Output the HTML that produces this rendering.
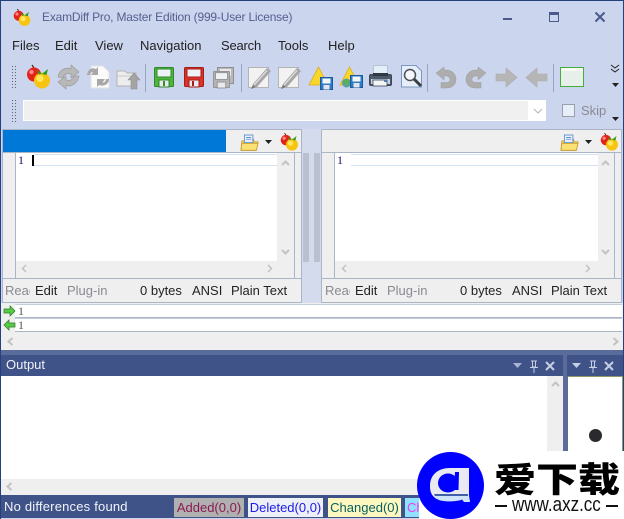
<!DOCTYPE html>
<html><head><meta charset="utf-8"><style>
html,body{margin:0;padding:0}
body{width:624px;height:519px;position:relative;overflow:hidden;background:#cbd5ee;font-family:"Liberation Sans","Noto Sans CJK SC",sans-serif;font-size:13px;color:#222}
.a{position:absolute}
.t{position:absolute;white-space:nowrap;line-height:16px;height:16px}
svg{position:absolute;overflow:visible}
</style></head><body>
<svg width="0" height="0" style="position:absolute">
<defs>
<g id="ap"><path d="M6 0l2 3" stroke="#521" stroke-width="1.2" fill="none"/><circle cx="8" cy="9.500" r="7" fill="#e2231a"/><circle cx="5.500" cy="7" r="2.200" fill="#f88"/><circle cx="16" cy="15.500" r="8" fill="#f7c412"/><circle cx="14" cy="13.500" r="3.500" fill="#fde95e"/><path d="M16 8.500L10.500 5 13 9.500zM16 9L22 4 20.500 10z" fill="#2f9a22"/></g>
<g id="fl"><rect x=".5" y=".5" width="19" height="19" rx="1"/><rect x="3" y="2" width="14" height="8" fill="#eef2f6"/><rect x="5" y="13" width="10" height="7" fill="#e8eaee"/></g>
<g id="pen"><rect x=".5" y="3.500" width="20" height="20" fill="#f2f2f2" stroke="#b4b4b4"/><path d="M3 25L5 20 19 4 23 7 9 23z" fill="#a6a6a6"/><path d="M6 21L19 6.500" stroke="#e2e2e2" stroke-width="1.300"/><path d="M3 25L5 21 7.500 23z" fill="#777"/></g>
<g id="wf"><path d="M9.500 0L19 18H0z" fill="#f8d62e" stroke="#dcae18" stroke-width=".8"/></g>
<g id="bf"><rect x=".5" y=".5" width="12" height="12" fill="#2f7cc6" stroke="#1a5a9c"/><rect x="2.500" y="1.500" width="8" height="5" fill="#f2f6fa"/><rect x="3.500" y="8" width="6" height="4.500" fill="#e2e6ec"/></g>
<g id="fo"><path d="M1 7h6l1-2h7v3H20l-2 10H0z" fill="#f5d35a" stroke="#c59b33"/><rect x="4" y="0" width="10" height="9" fill="#e6effa" stroke="#5d8cc6"/><path d="M6 3h6M6 5h6" stroke="#5d8cc6"/><path d="M1 10H20L18 18H0z" fill="#fbe272" stroke="#c59b33"/></g>
</defs></svg>

<!-- frame -->
<div class="a" style="left:0;top:0;width:624px;height:1px;background:#24407f"></div>
<div class="a" style="left:0;top:0;width:1px;height:519px;background:#24407f"></div>
<div class="a" style="left:623px;top:0;width:1px;height:519px;background:#24407f"></div>

<!-- title -->
<svg style="left:13px;top:9px" width="17" height="17"><use href="#ap" transform="scale(.72)"/></svg>
<div class="t" style="left:42px;top:9px;font-size:12px;color:#55608f;letter-spacing:-.19px">ExamDiff Pro, Master Edition (999-User License)</div>
<div class="a" style="left:503px;top:18px;width:9px;height:2px;background:#4a5a8c"></div>
<div class="a" style="left:549px;top:12px;width:8px;height:6px;border:1px solid #4a5a8c;border-top:3px solid #4a5a8c"></div>
<svg style="left:594px;top:11px" width="12" height="12"><path d="M1.500 1.500L10.500 10.500M10.500 1.500L1.500 10.500" stroke="#4a5a8c" stroke-width="2"/></svg>

<!-- menu -->
<div class="t" style="left:12px;top:38px">Files</div>
<div class="t" style="left:55px;top:38px">Edit</div>
<div class="t" style="left:95px;top:38px">View</div>
<div class="t" style="left:140px;top:38px">Navigation</div>
<div class="t" style="left:221px;top:38px;letter-spacing:-.2px">Search</div>
<div class="t" style="left:278px;top:38px">Tools</div>
<div class="t" style="left:328px;top:38px">Help</div>

<!-- grips -->
<div class="a" style="left:11px;top:65px;width:6px;height:25px;background-image:radial-gradient(#667 .6px,transparent .8px);background-size:3px 3px"></div>
<div class="a" style="left:11px;top:99px;width:6px;height:25px;background-image:radial-gradient(#667 .6px,transparent .8px);background-size:3px 3px"></div>

<!-- toolbar separators -->
<div class="a" style="left:145px;top:64px;width:1px;height:28px;background:#9aa6c0"></div>
<div class="a" style="left:241px;top:64px;width:1px;height:28px;background:#9aa6c0"></div>
<div class="a" style="left:427px;top:64px;width:1px;height:28px;background:#9aa6c0"></div>
<div class="a" style="left:553px;top:64px;width:1px;height:28px;background:#9aa6c0"></div>

<!-- toolbar icons -->
<svg style="left:26px;top:65px" width="24" height="24"><use href="#ap"/></svg>
<svg style="left:57px;top:65px" width="23" height="24"><path d="M1 12C2 5 8 2 14 3.500V0l8 7-8 6V9C10 8 7 9 6 13z" fill="#b8b8b8" stroke="#9c9c9c" stroke-width=".7"/><path d="M22 11C21 18 15 22 9 20.500V24l-8-7 8-6v4c4 1 7 0 8-4z" fill="#b8b8b8" stroke="#9c9c9c" stroke-width=".7"/></svg>
<svg style="left:87px;top:65px" width="23" height="24"><path d="M4 1H16L22 7V23H4z" fill="#fbfbfb" stroke="#e2e2e2"/><path d="M0 10C1 4 5 2 9 4L11 2V10H4L6 7.500C4 7 3 8 3 10z" fill="#a8a8a8"/><path d="M22 14C22 19 17 22 12 20L10 22V14H18L15.500 17.500C17 18 19 16 19 14z" fill="#a8a8a8"/></svg>
<svg style="left:116px;top:68px" width="24" height="21"><path d="M1 3H9L11 5H20V18H1z" fill="#ededed" stroke="#b4b4b4"/><path d="M1 8H20" stroke="#c8c8c8"/><path d="M18 5L24 12H21V21H15V12H12z" fill="#a4a4a4" stroke="#8f8f8f" stroke-width=".6"/></svg>

<svg style="left:154px;top:67px" width="20" height="20"><use href="#fl" fill="#4eb43c" stroke="#2f8a27"/><rect x="9" y="14" width="2" height="5" fill="#3c8a30"/></svg>
<svg style="left:184px;top:67px" width="20" height="20"><use href="#fl" fill="#d9332b" stroke="#a61c16"/><rect x="8" y="14" width="2" height="5" fill="#a61c16"/></svg>
<svg style="left:213px;top:67px" width="22" height="22"><rect x="4.500" y=".5" width="16" height="16" fill="#b8b8b8" stroke="#8f8f8f"/><rect x="7" y="2" width="11" height="7" fill="#e8e8e8"/><use href="#fl" transform="translate(0,4) scale(.85)" fill="#b4b4b4" stroke="#8f8f8f"/></svg>

<svg style="left:248px;top:64px" width="25" height="26"><use href="#pen"/></svg>
<svg style="left:278px;top:64px" width="25" height="26"><use href="#pen"/></svg>

<svg style="left:309px;top:67px" width="24" height="22"><use href="#wf"/><use href="#bf" x="11" y="10"/></svg>
<svg style="left:340px;top:67px" width="24" height="24"><use href="#wf"/><circle cx="6.500" cy="16" r="4.500" fill="#5aa0a0"/><path d="M3.500 14l4-2 2 3-3 4z" fill="#58b050"/><use href="#bf" x="10" y="8"/></svg>

<svg style="left:369px;top:65px" width="23" height="23"><rect x="4.500" y=".5" width="14" height="9" fill="#e4eef8" stroke="#b5c3d4"/><rect x=".5" y="9.500" width="22" height="11" rx="1.500" fill="#4b5a6c" stroke="#3b4656"/><rect x="2" y="14" width="19" height="5" fill="#cbd2da"/><rect x="4" y="15" width="14" height="6" fill="#f4f5f7" stroke="#3b4656" stroke-width=".8"/><rect x="15" y="15" width="3" height="2" fill="#4a7fb5"/><rect x="4" y="8" width="15" height="3" fill="#2f3843"/></svg>
<svg style="left:401px;top:65px" width="22" height="24"><path d="M.5.5H15L20.500 6V22H.5z" fill="#e6eef9" stroke="#7d98bf"/><circle cx="9" cy="10" r="5.500" fill="#f4f8fd" stroke="#4a4f58" stroke-width="1.500"/><path d="M13 14L20 21" stroke="#3a3f48" stroke-width="3"/></svg>

<svg style="left:436px;top:67px" width="20" height="22"><path d="M8 3H10C16 3 20 7 20 12.500S16 21 10 21H5V15.500H10C12.500 15.500 14 14.500 14 12.500S12.500 9 10 9H8V13L0 6 8 0z" fill="#adadad" stroke="#9c9c9c" stroke-width=".5"/></svg>
<svg style="left:466px;top:67px" width="20" height="22"><path d="M12 3H10C4 3 0 7 0 12.500S4 21 10 21H15V15.500H10C7.500 15.500 6 14.500 6 12.500S7.500 9 10 9H12V13L20 6 12 0z" fill="#adadad" stroke="#9c9c9c" stroke-width=".5"/></svg>
<svg style="left:495px;top:67px" width="23" height="21"><path d="M1 7H11V1L22 10.500 11 20V14H1z" fill="#b6b6b6" stroke="#aaa" stroke-width=".6"/></svg>
<svg style="left:525px;top:67px" width="23" height="21"><path d="M22 7H12V1L1 10.500 12 20V14H22z" fill="#b6b6b6" stroke="#aaa" stroke-width=".6"/></svg>
<svg style="left:560px;top:67px" width="24" height="20"><rect x=".5" y=".5" width="23" height="19" fill="#e8efe8" stroke="#43ad3c"/><rect x="1" y="1" width="22" height="3" fill="#f8faf6"/></svg>

<svg style="left:610px;top:64px" width="11" height="60"><path d="M1 1l4 3 4-3M1 5l4 3 4-3" stroke="#222" fill="none"/><path d="M2 19h7l-3.500 4z" fill="#222"/><path d="M2 53h7l-3.500 4z" fill="#222"/></svg>

<!-- combo -->
<div class="a" style="left:23px;top:100px;width:523px;height:21px;background:#fff"></div>
<div class="a" style="left:24px;top:101px;width:504px;height:19px;background:#f0f0f0"></div>
<svg style="left:533px;top:108px" width="10" height="6"><path d="M1 1l4 4 4-4" stroke="#b6b6b6" fill="none"/></svg>
<div class="a" style="left:562px;top:104px;width:11px;height:11px;border:1px solid #9a9fac;background:#e8eef8"></div>
<div class="t" style="left:581px;top:103px;color:#8a8a94">Skip</div>

<!-- left pane -->
<div class="a" style="left:2px;top:129px;width:298px;height:172px;background:#efefef;border:1px solid #aab5c8"></div>
<div class="a" style="left:3px;top:130px;width:223px;height:23px;background:#0078d7"></div>
<div class="a" style="left:3px;top:152px;width:298px;height:1px;background:#aab5c8"></div>
<svg style="left:241px;top:135px" width="18" height="16"><use href="#fo" transform="scale(.85)"/></svg>
<svg style="left:265px;top:140px" width="8" height="5"><path d="M0 0h7l-3.500 4z" fill="#222"/></svg>
<svg style="left:280px;top:133px" width="18" height="17"><use href="#ap" transform="scale(.75)"/></svg>

<div class="a" style="left:15px;top:153px;width:1px;height:125px;background:#aab5c8"></div>
<div class="a" style="left:294px;top:153px;width:1px;height:125px;background:#aab5c8"></div>
<div class="a" style="left:16px;top:153px;width:261px;height:108px;background:#fff"></div>
<div class="a" style="left:34px;top:154px;width:243px;height:12px;border-bottom:1px solid #d3e3f3;border-top:1px solid #d3e3f3;box-sizing:border-box"></div>
<div class="t" style="left:18px;top:152px;font-family:'Liberation Serif',serif;font-size:12px;color:#101070">1</div>
<div class="a" style="left:32px;top:155px;width:2px;height:11px;background:#000"></div>
<svg style="left:281px;top:160px" width="9" height="6"><path d="M1 5l3.500-3.500L8 5" stroke="#c2c2c2" stroke-width="2" fill="none"/></svg>
<svg style="left:281px;top:249px" width="9" height="6"><path d="M1 1l3.500 3.500L8 1" stroke="#c2c2c2" stroke-width="2" fill="none"/></svg>
<svg style="left:21px;top:264px" width="6" height="9"><path d="M5 1L1.500 4.500 5 8" stroke="#c2c2c2" stroke-width="1.500" fill="none"/></svg>
<svg style="left:267px;top:264px" width="6" height="9"><path d="M1 1l3.500 3.500L1 8" stroke="#c2c2c2" stroke-width="1.500" fill="none"/></svg>
<div class="a" style="left:3px;top:278px;width:298px;height:1px;background:#aab5c8"></div>
<div class="t" style="left:5px;top:283px;width:25px;overflow:hidden;color:#8a8a94">Read</div>
<div class="t" style="left:35px;top:283px">Edit</div>
<div class="t" style="left:67px;top:283px;color:#8a8a94">Plug-in</div>
<div class="t" style="left:140px;top:283px">0 bytes</div>
<div class="t" style="left:192px;top:283px">ANSI</div>
<div class="t" style="left:231px;top:283px">Plain Text</div>

<!-- splitter -->
<div class="a" style="left:302px;top:129px;width:19px;height:174px;background:#d4dbec"></div>
<div class="a" style="left:303px;top:153px;width:6px;height:109px;background:#b9c1d1"></div>
<div class="a" style="left:314px;top:153px;width:6px;height:109px;background:#b9c1d1"></div>

<!-- right pane -->
<div class="a" style="left:321px;top:129px;width:299px;height:172px;background:#efefef;border:1px solid #aab5c8"></div>
<div class="a" style="left:322px;top:152px;width:299px;height:1px;background:#aab5c8"></div>
<svg style="left:561px;top:135px" width="18" height="16"><use href="#fo" transform="scale(.85)"/></svg>
<svg style="left:585px;top:140px" width="8" height="5"><path d="M0 0h7l-3.500 4z" fill="#222"/></svg>
<svg style="left:600px;top:133px" width="18" height="17"><use href="#ap" transform="scale(.75)"/></svg>
<div class="a" style="left:334px;top:153px;width:1px;height:125px;background:#aab5c8"></div>
<div class="a" style="left:614px;top:153px;width:1px;height:125px;background:#aab5c8"></div>
<div class="a" style="left:335px;top:153px;width:263px;height:108px;background:#fff"></div>
<div class="a" style="left:351px;top:154px;width:247px;height:12px;border-bottom:1px solid #d3e3f3;border-top:1px solid #d3e3f3;box-sizing:border-box"></div>
<div class="t" style="left:337px;top:152px;font-family:'Liberation Serif',serif;font-size:12px;color:#101070">1</div>
<svg style="left:601px;top:160px" width="9" height="6"><path d="M1 5l3.500-3.500L8 5" stroke="#c2c2c2" stroke-width="2" fill="none"/></svg>
<svg style="left:601px;top:249px" width="9" height="6"><path d="M1 1l3.500 3.500L8 1" stroke="#c2c2c2" stroke-width="2" fill="none"/></svg>
<svg style="left:341px;top:264px" width="6" height="9"><path d="M5 1L1.500 4.500 5 8" stroke="#c2c2c2" stroke-width="1.500" fill="none"/></svg>
<svg style="left:585px;top:264px" width="6" height="9"><path d="M1 1l3.500 3.500L1 8" stroke="#c2c2c2" stroke-width="1.500" fill="none"/></svg>
<div class="a" style="left:322px;top:278px;width:299px;height:1px;background:#aab5c8"></div>
<div class="t" style="left:325px;top:283px;width:25px;overflow:hidden;color:#8a8a94">Read</div>
<div class="t" style="left:355px;top:283px">Edit</div>
<div class="t" style="left:387px;top:283px;color:#8a8a94">Plug-in</div>
<div class="t" style="left:460px;top:283px">0 bytes</div>
<div class="t" style="left:512px;top:283px">ANSI</div>
<div class="t" style="left:551px;top:283px">Plain Text</div>

<!-- diff rows -->
<div class="a" style="left:1px;top:303px;width:622px;height:30px;background:#efefef"></div>
<div class="a" style="left:15px;top:304px;width:607px;background:#fff;border-top:1px solid #c6cdda;border-bottom:1px solid #aab5c8;box-sizing:border-box;height:14px"></div>
<div class="a" style="left:15px;top:318px;width:607px;height:14px;background:#fff;border-top:1px solid #c6cdda;border-bottom:1px solid #aab5c8;box-sizing:border-box"></div>
<svg style="left:4px;top:306px" width="12" height="11"><path d="M0 3H6V0L11 5 6 10V7H0z" fill="#55cc44" stroke="#2b7a25" stroke-width=".7"/></svg>
<svg style="left:4px;top:320px" width="12" height="11"><path d="M11 3H5V0L0 5 5 10V7H11z" fill="#55cc44" stroke="#2b7a25" stroke-width=".7"/></svg>
<div class="t" style="left:18px;top:303px;font-family:'Liberation Serif',serif;font-size:12px;color:#555">1</div>
<div class="t" style="left:18px;top:317px;font-family:'Liberation Serif',serif;font-size:12px;color:#555">1</div>
<div class="a" style="left:1px;top:333px;width:622px;height:17px;background:#efefef"></div>
<svg style="left:7px;top:337px" width="7" height="9"><path d="M5.500 1L1.500 4.500 5.500 8" stroke="#c2c2c2" stroke-width="2" fill="none"/></svg>
<svg style="left:612px;top:337px" width="7" height="9"><path d="M1.500 1l4 3.500-4 3.500" stroke="#c2c2c2" stroke-width="2" fill="none"/></svg>

<!-- output -->
<div class="a" style="left:1px;top:350px;width:622px;height:146px;background:#5a6c9a"></div>
<div class="a" style="left:1px;top:355px;width:562px;height:21px;background:#3f5389"></div>
<div class="a" style="left:567px;top:355px;width:56px;height:21px;background:#3f5389"></div>
<div class="t" style="left:6px;top:357px;color:#f0f2f8">Output</div>
<svg style="left:513px;top:361px" width="50" height="12"><path d="M0 2h9L4.500 7z" fill="#a8b4d2"/><path d="M18 0h6M19.500 0v6h3V0M17 6.500h8M21 7v5" stroke="#c5cee2" fill="none"/><path d="M33 1l8 8M41 1l-8 8" stroke="#c5cee2" stroke-width="2"/></svg>
<svg style="left:572px;top:361px" width="50" height="12"><path d="M0 2h9L4.500 7z" fill="#c5cee2"/><path d="M18 0h6M19.500 0v6h3V0M17 6.500h8M21 7v5" stroke="#c5cee2" fill="none"/><path d="M33 1l8 8M41 1l-8 8" stroke="#c5cee2" stroke-width="2"/></svg>
<div class="a" style="left:1px;top:376px;width:546px;height:103px;background:#fff"></div>
<div class="a" style="left:547px;top:376px;width:16px;height:103px;background:#efefef"></div>
<svg style="left:551px;top:381px" width="9" height="6"><path d="M1 5l3.500-3.500L8 5" stroke="#c2c2c2" stroke-width="2" fill="none"/></svg>
<div class="a" style="left:1px;top:479px;width:622px;height:16px;background:#efefef"></div>
<svg style="left:6px;top:482px" width="7" height="9"><path d="M5.500 1L1.500 4.500 5.500 8" stroke="#c2c2c2" stroke-width="2" fill="none"/></svg>

<!-- right small panel -->
<div class="a" style="left:568px;top:376px;width:54px;height:80px;background:#fff;border-top:1px solid #8a9a60;box-sizing:border-box"></div>
<div class="a" style="left:622px;top:376px;width:1px;height:80px;background:#8a9a60"></div>
<div class="a" style="left:589px;top:429px;width:13px;height:13px;border-radius:50%;background:#2a2a2e"></div>

<!-- status -->
<div class="a" style="left:1px;top:495px;width:622px;height:23px;background:#3f5389"></div>
<div class="t" style="left:4px;top:499px;color:#f2f4fa;letter-spacing:.2px">No differences found</div>
<div class="t" style="left:174px;top:498px;width:70px;height:19px;line-height:19px;background:#b0b0b0;color:#8b1a50;text-align:center">Added(0,0)</div>
<div class="t" style="left:248px;top:498px;width:75px;height:19px;line-height:19px;background:#eef0f8;color:#1a1aee;text-align:center">Deleted(0,0)</div>
<div class="t" style="left:328px;top:498px;width:73px;height:19px;line-height:19px;background:#fdf8c0;color:#0a6060;text-align:center">Changed(0)</div>
<div class="t" style="left:405px;top:498px;width:14px;height:19px;line-height:19px;background:#90e0ff;color:#f03cf0;overflow:hidden;padding-left:2px;box-sizing:border-box">Changed</div>

<!-- watermark -->
<div class="a" style="left:419px;top:451px;width:205px;height:68px;background:#fff"></div>
<div class="a" style="left:417px;top:452px;width:67px;height:67px;border-radius:50%;background:#0000ff"></div>
<svg style="left:430px;top:465px" width="44" height="40"><path d="M0 21C0 9 9 3 20 3H39V27C39 30 39 32 40 36H34L32 34C28 37 8 37 4 32 1 29 0 26 0 21z" fill="#e9e9f2"/><path d="M4 30H38L40 37H34L32 34.500C27 37 12 37 8 34.500 6 33 5 32 4 30z" fill="#cfe4fa"/><path d="M4 29H38V31H5z" fill="#3f5fa8"/><ellipse cx="18" cy="18" rx="10" ry="9.500" fill="#0000ff"/><path d="M25 7H29L28.500 25H24z" fill="#0000ff"/></svg>
<div class="t" style="left:494px;top:455px;height:46px;line-height:46px;font-family:'Noto Sans CJK SC',sans-serif;font-weight:900;font-size:42px;color:#000;transform:scaleY(.82);transform-origin:50% 50%">爱下载</div>
<div class="a" style="left:495px;top:505px;width:12px;height:2px;background:#111"></div>
<div class="t" style="left:512px;top:494px;height:22px;line-height:22px;font-size:20px;color:#111;transform:scaleX(.85);transform-origin:0 50%">www.axz.cc</div>
<div class="a" style="left:606px;top:505px;width:12px;height:2px;background:#111"></div>
</body></html>
